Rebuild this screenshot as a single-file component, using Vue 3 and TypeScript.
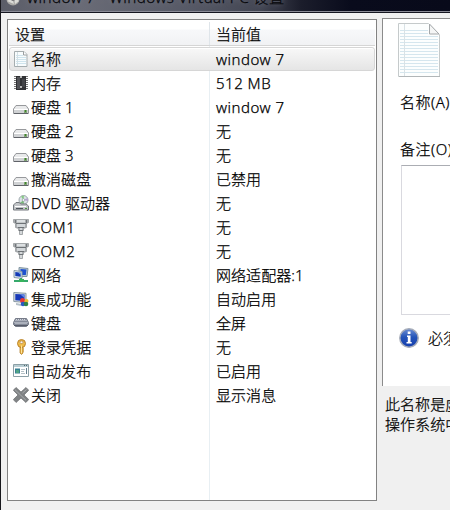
<script setup lang="ts">
interface Row {
  icon: string
  name: string
  value: string
}

const rows: Row[] = [
  { icon: 'page', name: '名称', value: 'window 7' },
  { icon: 'memory', name: '内存', value: '512 MB' },
  { icon: 'disk', name: '硬盘 1', value: 'window 7' },
  { icon: 'disk', name: '硬盘 2', value: '无' },
  { icon: 'disk', name: '硬盘 3', value: '无' },
  { icon: 'disk', name: '撤消磁盘', value: '已禁用' },
  { icon: 'dvd', name: 'DVD 驱动器', value: '无' },
  { icon: 'port', name: 'COM1', value: '无' },
  { icon: 'port', name: 'COM2', value: '无' },
  { icon: 'network', name: '网络', value: '网络适配器:1' },
  { icon: 'integration', name: '集成功能', value: '自动启用' },
  { icon: 'keyboard', name: '键盘', value: '全屏' },
  { icon: 'key', name: '登录凭据', value: '无' },
  { icon: 'publish', name: '自动发布', value: '已启用' },
  { icon: 'close', name: '关闭', value: '显示消息' },
]

const isLatin = (text: string): boolean => /^[\x20-\x7e]+$/.test(text)
</script>

<template>
  <div class="window">
    <header class="titlebar">
      <svg class="app-icon" width="14" height="14" viewBox="0 0 14 14">
        <circle cx="7" cy="7" r="6.5" fill="#aaa9a6" />
        <path d="M1 9l5-3 2 6zM8 4l5 5-4 3z" fill="#dcdcd8" />
        <circle cx="7" cy="7" r="2" fill="#77777a" />
      </svg>
      <span class="title">window 7 - Windows Virtual PC 设置</span>
    </header>
    <main class="body">
      <section class="list">
        <div class="list-head">
          <div class="head-cell first">设置</div>
          <div class="head-cell">当前值</div>
        </div>
        <div class="rows">
          <div v-for="(row, i) in rows" :key="i" class="row" :class="{ selected: i === 0 }">
            <div class="cell-name">
              <svg class="icon" width="16" height="16" viewBox="0 0 16 16">
                <g v-if="row.icon === 'page'">
                  <path d="M1.500.5h9.500l3 3v12H1.500z" fill="#f8fcfd" stroke="#a5adaf" />
                  <path d="M3 4.500h7M3 6.500h10M3 8.500h10M3 10.500h10M3 12.500h10" stroke="#cfe4ed" />
                  <path d="M4.500 1v14" stroke="#d3dfe4" />
                  <path d="M10.500.5v3.500H14" fill="#fff" stroke="#9a9fa1" />
                </g>
                <g v-else-if="row.icon === 'memory'">
                  <path d="M1 1.500h14M1 3.500h14M1 5.500h14M1 7.500h14M1 9.500h14M1 11.500h14M1 13.500h14" stroke="#777" />
                  <path d="M3 1h10v14H3z" fill="#303134" />
                  <path d="M4 2h3v12H4z" fill="#515256" />
                  <path d="M7 1h2v2H7zM7 11h2v2H7z" fill="#b7b7b7" />
                  <path d="M9 4h3v8H9z" fill="#424347" />
                </g>
                <g v-else-if="row.icon === 'disk'">
                  <path d="M3 6.500h10l2.500 3.500v4.500H.5V10z" fill="#d0d2d4" stroke="#97999c" />
                  <path d="M3.300 7h9.400l2 3H1.300z" fill="#e9eaeb" />
                  <path d="M1 10.500h14" stroke="#fff" />
                  <path d="M1 14.500h14" stroke="#606369" />
                  <path d="M11 11h3v3h-3z" fill="#80a474" />
                  <path d="M12 11h1v2h-1z" fill="#3f872b" />
                </g>
                <g v-else-if="row.icon === 'dvd'">
                  <circle cx="10.500" cy="5" r="4.500" fill="#dbe3e6" stroke="#9da7ac" />
                  <path d="M10.500 5L8 1.500l3-1z" fill="#86ca83" />
                  <path d="M10.500 5l4-2 .5 3z" fill="#b6a0d0" />
                  <path d="M10.500 5L7 8l4 1z" fill="#77ba77" />
                  <circle cx="10.500" cy="5" r="1.300" fill="#fff" stroke="#819197" stroke-width=".6" />
                  <path d="M3 7.500h3l2 1.500h5l2.500 2v4H.5v-5z" fill="#c2c5c8" stroke="#74797e" />
                  <path d="M2 11.500h11" stroke="#fff" />
                  <path d="M3 13.500h7" stroke="#4f555b" />
                  <path d="M12 13h2v1h-2z" fill="#4c9840" />
                </g>
                <g v-else-if="row.icon === 'port'">
                  <path d="M.5.500h15v3l-2 1v4l-3 1v2h-1v4h-3v-4h-1v-2l-3-1v-4l-2-1z" fill="#a9adb0" stroke="#8f9396" stroke-width=".7" />
                  <path d="M4 1h8v2.500H4z" fill="#dce0e2" />
                  <path d="M4 5h8v3H4z" fill="#d3d7da" />
                  <path d="M3 4.500h10M5 8.500h6M6 11.500h4" stroke="#6d7276" />
                  <path d="M7 9v2h2V9zM7 12v3h2v-3z" fill="#d5d8da" />
                  <path d="M2.500 1v3M13.500 1v3" stroke="#72777b" />
                </g>
                <g v-else-if="row.icon === 'network'">
                  <path d="M6 .5l9 1-1 8H6z" fill="#b6c8d5" stroke="#8194a1" />
                  <path d="M7.500 2l6 .5-.7 5.500H7.500z" fill="#1e51d0" />
                  <path d="M1 3.500l8 1v7l-8-1z" fill="#d4e2eb" stroke="#8799a5" />
                  <path d="M2.300 5l5.400.7v4.100l-5.400-.7z" fill="#1239b5" />
                  <path d="M5 5.400l2.700.3v2z" fill="#6da8f2" />
                  <path d="M8 11v2M1 14h14" stroke="#36a86c" stroke-width="2" />
                  <path d="M6 12h5v3H6z" fill="#38b45b" />
                </g>
                <g v-else-if="row.icon === 'integration'">
                  <path d="M.8 1.500l12.200.8v9.200L.8 10.500z" fill="#d3dbe2" stroke="#8797a2" />
                  <path d="M2.300 3l9.200.6v6.400l-9.200-.8z" fill="#1739b9" />
                  <path d="M7 3.300l4.500.3v3.400z" fill="#6287e5" />
                  <path d="M3 12l5 1v2l-5-1z" fill="#b4bfc7" />
                  <circle cx="9.500" cy="9.500" r="2.500" fill="#e73838" />
                  <circle cx="13.500" cy="10" r="2" fill="#efc02e" />
                  <circle cx="10" cy="13" r="2.300" fill="#2959c4" />
                  <circle cx="13" cy="13" r="2.300" fill="#31834a" />
                </g>
                <g v-else-if="row.icon === 'keyboard'">
                  <path d="M2.500 3.500h11l2 4v2l-2 2h-11l-2-2v-2z" fill="#858b99" stroke="#777c89" />
                  <path d="M3 4.500h10M2.500 5.500h11M1.500 7.500h13M2.500 8.500h11" stroke="#d3d7df" stroke-dasharray="1 1" />
                  <path d="M1 10.500h14" stroke="#575c69" />
                </g>
                <g v-else-if="row.icon === 'key'">
                  <path d="M7 8h3v6l-1.500 1.500L7 14z" fill="#ebb545" stroke="#ab7623" stroke-width=".7" />
                  <circle cx="8.500" cy="4.500" r="4" fill="#efbb49" stroke="#b27b24" stroke-width=".9" />
                  <ellipse cx="8.500" cy="3.200" rx="1.700" ry="1.200" fill="#fff" stroke="#a9752e" stroke-width=".7" />
                  <path d="M8.500 6.500V14" stroke="#ffe59b" />
                  <path d="M10 10h1M10 12h1" stroke="#c78d2c" />
                </g>
                <g v-else-if="row.icon === 'publish'">
                  <path d="M.5 1.500h15v12H.5z" fill="#fff" stroke="#8ca0a6" />
                  <path d="M1 2h14v2H1z" fill="#b9cdd3" />
                  <path d="M11 2.500h1M13 2.500h1" stroke="#536970" />
                  <path d="M2 5.500h5v5H2z" fill="#367f92" />
                  <path d="M3 7h3v3H3z" fill="#50a485" />
                  <path d="M8 6.500h4M8 8.500h3M8 10.500h4" stroke="#b5c1c6" />
                  <path d="M13.500 5v6" stroke="#64808f" />
                </g>
                <g v-else>
                  <path d="M3 .5L8 5 13 .5 15.700 3.200 11 8l4.700 4.500-2.800 3L8 11l-4.900 4.500L.3 12.600 5 8 .3 3.300z" fill="#808385" stroke="#6a6d70" stroke-width=".7" />
                  <path d="M2 2.700l11 10.600M13.500 2.500L9.500 6" stroke="#a9acae" />
                </g>
              </svg>
              <span :class="{ latin: isLatin(row.name) }">{{ row.name }}</span>
            </div>
            <div class="cell-value" :class="{ latin: isLatin(row.value) }">{{ row.value }}</div>
          </div>
        </div>
      </section>
      <aside class="side">
        <div class="panel">
          <svg class="document" width="42" height="54" viewBox="0 0 42 54">
            <path d="M.5.5h30l11 11v42H.5z" fill="#fcfefe" stroke="#c5cacb" />
            <path d="M2 7.500h28M2 10.500h28M2 13.500h38M2 16.500h38M2 19.500h38M2 22.500h38M2 25.500h38M2 28.500h38M2 31.500h38M2 34.500h38M2 37.500h38M2 40.500h38M2 43.500h38M2 46.500h38M2 49.500h38" stroke="#d5e6ee" />
            <path d="M6.500 1v52" stroke="#d9e2e6" />
            <path d="M31.500 1v10H41z" fill="#f5f6f6" stroke="#a4a8aa" />
            <path d="M1 53.500h41" stroke="#b1b6b8" />
          </svg>
          <label class="label name-label">名称(A):</label>
          <label class="label note-label">备注(O):</label>
          <div class="note-box"></div>
          <div class="info">
            <svg width="20" height="20" viewBox="0 0 20 20">
              <defs>
                <linearGradient id="info-fill" x2="0" y2="1">
                  <stop offset="0" stop-color="#6c8ed4" />
                  <stop offset=".45" stop-color="#2454b8" />
                  <stop offset="1" stop-color="#143dae" />
                </linearGradient>
              </defs>
              <circle cx="10" cy="10" r="9.200" fill="url(#info-fill)" stroke="#a6acb8" stroke-width="1.500" />
              <path d="M8.700 3.500h2.800V6H8.700zM8 7.500h3.500v6.500h1.200v1.500H7.500V14h1.300V9H8z" fill="#fff" />
            </svg>
            <span>必须键入名称</span>
          </div>
        </div>
        <p class="hint">此名称是虚拟机的名称<br />操作系统中的名称</p>
      </aside>
    </main>
  </div>
</template>

<style>
body {
  margin: 0;
  overflow: hidden;
}
</style>

<style scoped>
.window {
  box-sizing: border-box;
  width: 450px;
  height: 510px;
  overflow: hidden;
  border-left: 1px solid #17171c;
  background: #f0f0f0;
  color: #000;
  font: 300 15px/24px "Noto Sans", "Noto Sans CJK SC", sans-serif;
  letter-spacing: 0.05px;
  -webkit-text-stroke: 0.25px #000;
  white-space: nowrap;
}
.latin {
  letter-spacing: 0.5px;
}
.titlebar {
  box-sizing: border-box;
  display: flex;
  height: 13px;
  overflow: hidden;
  border-bottom: 1px solid #14151f;
  box-shadow: inset 0 -1px #8a8b96;
  background: linear-gradient(90deg, #5b5d68 0, #696b76 80px, #565966 190px, #424552 260px, #1b1d2b 300px, #090b1c 350px, #080a1a 100%);
}
.app-icon {
  flex: none;
  margin: -8px 0 0 5px;
}
.title {
  height: 24px;
  margin: -15px 0 0 7px;
  color: #090a10;
  font-size: 15.200px;
  letter-spacing: 0.38px;
  text-shadow: 0 0 6px #858792;
}
.body {
  display: flex;
  height: 497px;
}
.list {
  box-sizing: border-box;
  flex: none;
  width: 370px;
  height: 482px;
  margin: 6px 5px 0 6px;
  border: 1px solid #828282;
  background: linear-gradient(90deg, transparent 201px, #e8eff3 201px, #e8eff3 202px, transparent 202px), #fff;
}
.list-head {
  box-sizing: border-box;
  display: flex;
  height: 26px;
  margin: 0 1px;
  padding-top: 2px;
  border-bottom: 1px solid #d5d5d5;
  background: linear-gradient(#fff 0, #fff 9px, #f7f8fa 10px, #f1f2f4 100%);
}
.head-cell {
  line-height: 25px;
  padding-left: 6px;
}
.head-cell.first {
  box-sizing: border-box;
  width: 201px;
  border-right: 1px solid #dfe5ea;
}
.rows {
  padding: 1px 1px 0;
}
.row {
  box-sizing: border-box;
  display: flex;
  height: 24px;
}
.row.selected {
  border: 1px solid #d6d6d6;
  border-radius: 3px;
  background: linear-gradient(#f8f8f8, #e5e5e5);
  box-shadow: inset 0 1px #fff;
}
.cell-name {
  box-sizing: border-box;
  display: flex;
  flex: none;
  align-items: center;
  gap: 2px;
  width: 207px;
  padding-left: 4px;
}
.cell-value {
  line-height: 25px;
}
.selected .cell-name {
  width: 206px;
  padding-left: 3px;
}
.selected .cell-value {
  line-height: 23px;
}
.icon {
  flex: none;
}
.side {
  flex: none;
  width: 68px;
  padding-top: 5px;
  overflow: hidden;
}
.panel {
  box-sizing: border-box;
  width: 300px;
  height: 368px;
  padding: 4px 0 0 15px;
  border: solid #8b8b8b;
  border-width: 1px 0 0 1px;
  background: #fff;
}
.document {
  display: block;
}
.label {
  display: block;
  height: 24px;
  margin-left: 2px;
  letter-spacing: 0.5px;
}
.name-label {
  margin-top: 13px;
}
.note-label {
  margin-top: 23px;
}
.note-box {
  box-sizing: border-box;
  width: 260px;
  height: 150px;
  margin: 4px 0 0 3px;
  border: 1px solid #d9d9df;
  border-top-color: #abadb3;
}
.info {
  display: flex;
  align-items: center;
  gap: 9px;
  margin: 11px 0 0 1px;
}
.hint {
  margin: 8px 0 0 3px;
  line-height: 20px;
}
</style>
